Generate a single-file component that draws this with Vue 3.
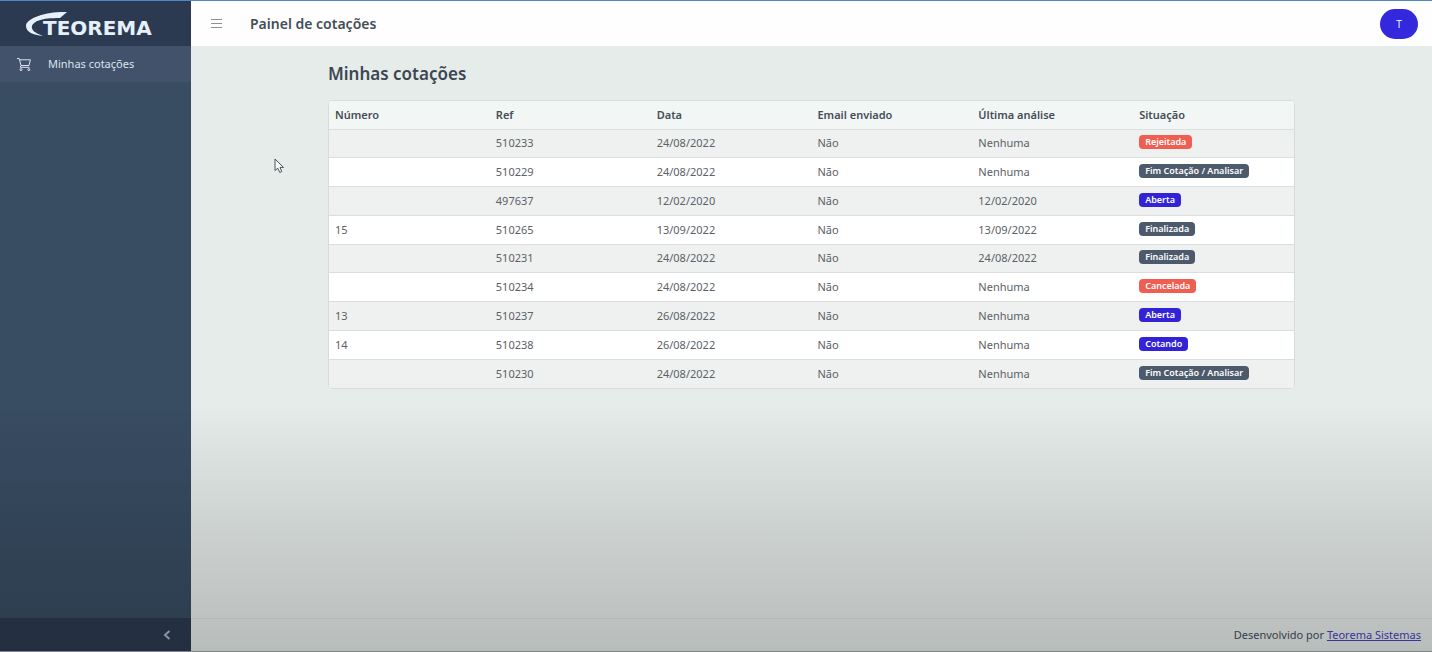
<script setup>
import { ref } from 'vue'

const collapsed = ref(false)
const columns = ['Número', 'Ref', 'Data', 'Email enviado', 'Última análise', 'Situação']
const quotes = [
  { number: '', code: '510233', date: '24/08/2022', sent: 'Não', analysis: 'Nenhuma', status: 'Rejeitada', tone: 'danger' },
  { number: '', code: '510229', date: '24/08/2022', sent: 'Não', analysis: 'Nenhuma', status: 'Fim Cotação / Analisar', tone: 'neutral' },
  { number: '', code: '497637', date: '12/02/2020', sent: 'Não', analysis: '12/02/2020', status: 'Aberta', tone: 'primary' },
  { number: '15', code: '510265', date: '13/09/2022', sent: 'Não', analysis: '13/09/2022', status: 'Finalizada', tone: 'neutral' },
  { number: '', code: '510231', date: '24/08/2022', sent: 'Não', analysis: '24/08/2022', status: 'Finalizada', tone: 'neutral' },
  { number: '', code: '510234', date: '24/08/2022', sent: 'Não', analysis: 'Nenhuma', status: 'Cancelada', tone: 'danger' },
  { number: '13', code: '510237', date: '26/08/2022', sent: 'Não', analysis: 'Nenhuma', status: 'Aberta', tone: 'primary' },
  { number: '14', code: '510238', date: '26/08/2022', sent: 'Não', analysis: 'Nenhuma', status: 'Cotando', tone: 'primary' },
  { number: '', code: '510230', date: '24/08/2022', sent: 'Não', analysis: 'Nenhuma', status: 'Fim Cotação / Analisar', tone: 'neutral' }
]
</script>

<template>
  <div class="app">
    <aside class="sidebar" :class="{ collapsed }">
      <a class="brand" href="#" aria-label="Teorema">
        <svg class="swoosh" width="42" height="26" viewBox="0 0 42 26" aria-hidden="true">
          <path d="M41 1C24 0 0 6 0 15C0 21 7 24 17 25C9 22 5 19 6 15C8 10 15 7 34 7Z" fill="#e6f0fa" />
        </svg>
        <span class="brand-name">TEOREMA</span>
      </a>
      <nav class="menu">
        <a class="menu-item" href="#">
          <svg width="16" height="16" viewBox="0 0 16 16" fill="none" stroke="currentColor" stroke-width="1" stroke-linejoin="round" aria-hidden="true">
            <path d="M1 2.5H3.2L5 9.5H13L14.4 3.8H3.7M5 9.5L4.3 11.3H13.5" />
            <circle cx="5" cy="13.6" r="1" />
            <circle cx="12.8" cy="13.6" r="1" />
          </svg>
          <span>Minhas cotações</span>
        </a>
      </nav>
      <button class="collapse" type="button" aria-label="Recolher menu" @click="collapsed = !collapsed">
        <svg width="8" height="10" viewBox="0 0 8 10" fill="none" stroke="currentColor" stroke-width="2" aria-hidden="true">
          <path d="M6.5 1L2 5L6.5 9" />
        </svg>
      </button>
    </aside>

    <div class="page">
      <header class="topbar">
        <button class="toggle" type="button" aria-label="Menu" @click="collapsed = !collapsed">
          <svg width="11" height="11" viewBox="0 0 11 11" stroke="currentColor" stroke-width="1" aria-hidden="true">
            <path d="M0 1.5H11M0 5.5H11M0 9.5H11" />
          </svg>
        </button>
        <span class="title">Painel de cotações</span>
        <button class="avatar" type="button" aria-label="Conta T">T</button>
      </header>

      <main class="content">
        <h1>Minhas cotações</h1>
        <div class="card">
          <table>
            <thead>
              <tr><th v-for="column in columns" :key="column" scope="col">{{ column }}</th></tr>
            </thead>
            <tbody>
              <tr v-for="quote in quotes" :key="quote.code">
                <td>{{ quote.number }}</td>
                <td>{{ quote.code }}</td>
                <td>{{ quote.date }}</td>
                <td>{{ quote.sent }}</td>
                <td>{{ quote.analysis }}</td>
                <td class="status"><span class="badge" :class="quote.tone">{{ quote.status }}</span></td>
              </tr>
            </tbody>
          </table>
        </div>
      </main>

      <footer class="footer">
        <span>Desenvolvido por <a href="#">Teorema Sistemas</a></span>
      </footer>
    </div>

    <svg class="pointer" width="11" height="16" viewBox="0 0 11 16" aria-hidden="true">
      <path d="M1 1V12.5L3.8 10.2L5.8 14.5L7.8 13.5L6 9.4H9.5Z" fill="#f6f8f8" stroke="#4c5358" stroke-width="1" />
    </svg>
  </div>
</template>

<style>
body {
  margin: 0;
}
</style>

<style scoped>
.app {
  position: relative;
  box-sizing: border-box;
  display: flex;
  min-height: 100vh;
  border-top: 1px solid #4f86c6;
  border-bottom: 1px solid #7f8688;
  background: #e6ecea;
  color: #454e57;
  font-family: "Noto Sans", "Open Sans", sans-serif;
  font-size: 11px;
  line-height: 16px;
}

.app::after {
  content: "";
  position: absolute;
  inset: 62% 0 0;
  background: linear-gradient(rgba(0, 0, 0, 0), rgba(0, 0, 0, 0.1) 45%, rgba(0, 0, 0, 0.2));
  pointer-events: none;
}

button {
  padding: 0;
  border: 0;
  background: none;
  font: inherit;
  cursor: pointer;
}

.sidebar {
  display: flex;
  flex: none;
  flex-direction: column;
  width: 191px;
  background: #384c62;
}

.sidebar.collapsed {
  width: 48px;
  overflow: hidden;
}

.brand {
  display: flex;
  align-items: center;
  height: 45px;
  padding-left: 26px;
  background: #2b3a50;
  color: #e6f0fa;
  text-decoration: none;
}

.swoosh {
  flex: none;
  margin-right: -25px;
}

.brand-name {
  padding-top: 9px;
  font-family: "DejaVu Sans", sans-serif;
  font-size: 20px;
  font-weight: 700;
  line-height: 24px;
}

.menu {
  flex: 1;
}

.menu-item {
  display: flex;
  align-items: center;
  gap: 16px;
  height: 36px;
  padding-left: 16px;
  background: #42526a;
  color: #dbe4ee;
  text-decoration: none;
  white-space: nowrap;
}

.collapse {
  display: flex;
  align-items: center;
  justify-content: flex-end;
  height: 33px;
  padding-right: 20px;
  background: #2c3a50;
  color: #a9b6c6;
}

.page {
  display: flex;
  flex: 1;
  flex-direction: column;
  min-width: 0;
}

.topbar {
  display: flex;
  align-items: center;
  height: 45px;
  padding: 0 14px 0 20px;
  background: #fefefe;
}

.toggle {
  display: flex;
  margin-right: 28px;
  color: #8b9095;
}

.title {
  flex: 1;
  font-size: 14px;
  font-weight: 600;
  line-height: 20px;
}

.avatar {
  width: 38px;
  height: 30px;
  border-radius: 15px;
  background: #3428dc;
  color: #e9e8ff;
  font-size: 10px;
}

.content {
  box-sizing: border-box;
  flex: 1;
  width: 100%;
  max-width: 967px;
  margin: 0 auto;
  padding-top: 16px;
}

h1 {
  margin: 0 0 14px;
  color: #3c4750;
  font-size: 17px;
  font-weight: 600;
  line-height: 24px;
}

.card {
  overflow: hidden;
  border: 1px solid #d6dcdc;
  border-radius: 4px;
  background: #fff;
}

table {
  width: 100%;
  height: 287px;
  border-collapse: collapse;
  table-layout: fixed;
}

th,
td {
  height: 28px;
  padding: 0 6px;
  box-sizing: border-box;
  text-align: left;
}

th {
  background: #f2f6f5;
  font-weight: 600;
}

td {
  border-top: 1px solid #dadfde;
  color: #5b6167;
}

tbody tr:nth-child(odd) {
  background: #eff1f0;
}

.status {
  padding-bottom: 2px;
}

.badge {
  display: block;
  width: fit-content;
  padding: 0 6px;
  border-radius: 4px;
  color: #fff;
  font-size: 9px;
  font-weight: 600;
  line-height: 14px;
  white-space: nowrap;
}

.danger {
  background: #f05d51;
}

.neutral {
  background: #4c5a6c;
}

.primary {
  background: #3223d6;
}

.footer {
  display: flex;
  align-items: center;
  justify-content: flex-end;
  height: 32px;
  padding-right: 11px;
  border-top: 1px solid #dce1e0;
}

.footer a {
  color: #4b40c0;
}

.pointer {
  position: absolute;
  top: 157px;
  left: 274px;
}
</style>
